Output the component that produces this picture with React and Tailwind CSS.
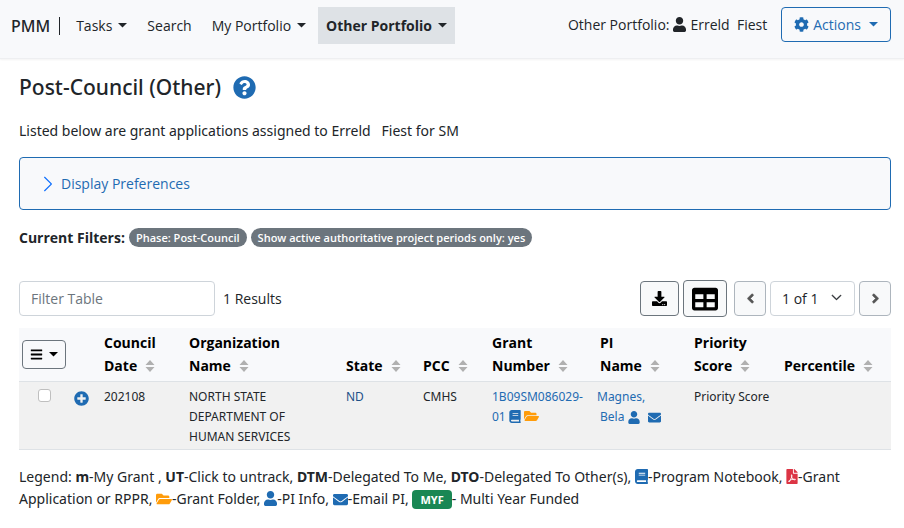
import React from 'react';
import {
  FaUser,
  FaCog,
  FaQuestionCircle,
  FaDownload,
  FaTable,
  FaAngleLeft,
  FaAngleRight,
  FaBars,
  FaPlusCircle,
  FaBook,
  FaFolderOpen,
  FaEnvelope,
  FaFilePdf,
} from 'react-icons/fa';
import { BsChevronRight, BsChevronDown } from 'react-icons/bs';

const Caret = () => (
  <svg width="9" height="5" viewBox="0 0 9 5" fill="currentColor" aria-hidden="true">
    <path d="M0 0h9L4.5 4.5z" />
  </svg>
);

const SortIcon = () => (
  <svg
    className="ml-2 inline-block align-[-1px]"
    width="10"
    height="12"
    viewBox="0 0 10 12"
    fill="#b0b0b0"
    aria-hidden="true"
  >
    <path d="M5 0l4.5 5h-9z M5 12l4.5-5h-9z" />
  </svg>
);

const NavItem = ({ label, dropdown, active }) => (
  <a
    href="#"
    className={
      active
        ? 'flex h-[37px] items-center gap-1.5 bg-[#dee2e6] px-2 font-bold'
        : 'flex h-[37px] items-center gap-1.5 px-2'
    }
  >
    {label}
    {dropdown && <Caret />}
  </a>
);

const Header = () => (
  <header className="flex h-[59px] items-start justify-between border-b border-[#eeeff1] bg-[#f8f9fb] pt-[7px] pr-[13px] pl-[11px] shadow-[0_1px_2px_rgba(0,0,0,0.05)]">
    <div className="flex items-center">
      <a
        href="#"
        className="mr-2 border-r border-[#212529] pr-[9px] font-['Noto_Sans',sans-serif] text-base leading-[18px] font-medium"
      >
        PMM
      </a>
      <nav className="flex items-center gap-1">
        <NavItem label="Tasks" dropdown />
        <NavItem label="Search" />
        <NavItem label="My Portfolio" dropdown />
        <NavItem label="Other Portfolio" dropdown active />
      </nav>
    </div>
    <div className="flex items-center">
      <span className="mr-[14px] flex items-center gap-1">
        Other Portfolio: <FaUser className="h-[15px] w-[13px]" /> Erreld&nbsp; Fiest
      </span>
      <button
        type="button"
        className="flex h-[35px] items-center gap-1 rounded border border-[#1f6bb2] px-3 text-[#1f6bb2]"
      >
        <FaCog size={15} />
        Actions
        <span className="ml-1">
          <Caret />
        </span>
      </button>
    </div>
  </header>
);

const Badge = ({ children }) => (
  <span className="rounded-full bg-[#6c757d] px-[7px] py-px text-[11px] leading-[17px] font-semibold text-white">
    {children}
  </span>
);

const Toolbar = () => (
  <div className="flex items-center justify-between">
    <div className="flex items-center gap-2">
      <input
        type="text"
        aria-label="Filter Table"
        placeholder="Filter Table"
        className="h-[35px] w-[196px] rounded border border-[#ced4da] bg-white px-[11px] placeholder:text-[#6c757d]"
      />
      <span>1 Results</span>
    </div>
    <div className="flex items-center">
      <button
        type="button"
        aria-label="Download"
        className="mr-1 flex h-[35px] w-[39px] items-center justify-center rounded border border-[#6c757d] bg-[#f8f9fa] text-black"
      >
        <FaDownload size={15} />
      </button>
      <button
        type="button"
        aria-label="Table view"
        className="mr-[7px] flex h-[37px] w-11 items-center justify-center rounded border border-[#6c757d] bg-[#f8f9fa] text-black"
      >
        <FaTable size={26} />
      </button>
      <button
        type="button"
        aria-label="Previous page"
        className="mr-1 flex h-[35px] w-8 items-center justify-center rounded border border-[#adb5bd] bg-[#f8f9fa] text-[#555]"
      >
        <FaAngleLeft size={15} stroke="currentColor" strokeWidth={16} />
      </button>
      <div className="relative mr-1">
        <select
          aria-label="Page"
          className="h-[35px] w-[85px] appearance-none rounded border border-[#ced4da] bg-white pl-[11px]"
        >
          <option>1 of 1</option>
        </select>
        <BsChevronDown
          size={11}
          stroke="currentColor"
          strokeWidth={1}
          className="pointer-events-none absolute top-[11px] right-[13px]"
        />
      </div>
      <button
        type="button"
        aria-label="Next page"
        className="flex h-[35px] w-8 items-center justify-center rounded border border-[#adb5bd] bg-[#f8f9fa] text-[#555]"
      >
        <FaAngleRight size={15} stroke="currentColor" strokeWidth={16} />
      </button>
    </div>
  </div>
);

const columns = [
  { name: 'Council Date', width: 'w-[85px]' },
  { name: 'Organization Name', width: '' },
  { name: 'State', width: 'w-[77px]' },
  { name: 'PCC', width: 'w-[69px]' },
  { name: 'Grant Number', width: 'w-[108px]' },
  { name: 'PI Name', width: 'w-[94px]' },
  { name: 'Priority Score', width: 'w-[90px]' },
  { name: 'Percentile', width: 'w-[115px]' },
];

const HeadLabel = ({ name }) => {
  const words = name.split(' ');
  const last = words.pop();
  return (
    <>
      {words.length > 0 && (
        <>
          {words.join(' ')}
          <br />
        </>
      )}
      <span className="whitespace-nowrap">
        {last}
        <SortIcon />
      </span>
    </>
  );
};

const GrantTable = () => (
  <table className="mt-[11px] w-full table-fixed border-collapse text-left">
    <colgroup>
      <col className="w-[51px]" />
      <col className="w-[26px]" />
      {columns.map((c) => (
        <col key={c.name} className={c.width} />
      ))}
    </colgroup>
    <thead className="bg-[#f8f9fb] text-black">
      <tr className="border-b border-[#dee2e6]">
        <th className="pl-[3px]">
          <button
            type="button"
            aria-label="Row actions"
            className="flex h-[29px] w-11 items-center justify-center gap-1.5 rounded border border-[#6c757d]"
          >
            <FaBars size={13} />
            <Caret />
          </button>
        </th>
        <th />
        {columns.map((c) => (
          <th key={c.name} className="px-2 pt-[3px] pb-1 align-bottom leading-[23px] font-bold">
            <HeadLabel name={c.name} />
          </th>
        ))}
      </tr>
    </thead>
    <tbody className="font-['Noto_Sans',sans-serif] text-[12px] leading-5">
      <tr className="border-b border-[#dee2e6] bg-[#f1f1f1] align-top">
        <td className="pt-[7px] pl-[19px]">
          <input
            type="checkbox"
            aria-label="Select grant"
            className="block size-[13px] appearance-none rounded-[3px] border border-[#bfbfbf] bg-white"
          />
        </td>
        <td className="pt-[9px] pl-1">
          <button type="button" aria-label="Expand row" className="block text-[#1f6bb2]">
            <FaPlusCircle size={15} />
          </button>
        </td>
        <td className="px-2 pt-[5px] pb-0.5">202108</td>
        <td className="px-2 pt-[5px] pb-0.5">
          NORTH STATE
          <br />
          DEPARTMENT OF
          <br />
          HUMAN SERVICES
        </td>
        <td className="px-2 pt-[5px] pb-0.5 text-[#1d5088]">ND</td>
        <td className="px-2 pt-[5px] pb-0.5">CMHS</td>
        <td className="pt-[5px] pb-0.5 pl-2 whitespace-nowrap text-[#1f6bb2]">
          <a href="#">
            1B09SM086029-
            <br />
            01
          </a>{' '}
          <FaBook className="inline h-[13px] w-3 align-[-2px]" />{' '}
          <FaFolderOpen className="inline h-[14px] w-[15px] align-[-2px] text-[#ff9c0a]" />
        </td>
        <td className="pt-[5px] pb-0.5 pl-[5px] text-[#1f6bb2]">
          <a href="#">Magnes,</a>
          <div className="flex items-center pl-[3px]">
            <a href="#">Bela</a>
            <FaUser className="ml-1 h-[13px] w-3" />
            <FaEnvelope size={13} className="ml-2" />
          </div>
        </td>
        <td className="px-2 pt-[5px] pb-0.5 whitespace-nowrap">Priority Score</td>
        <td />
      </tr>
    </tbody>
  </table>
);

const Legend = () => (
  <p className="mt-4 font-['Noto_Sans',sans-serif] leading-[22px]">
    Legend: <b>m</b>-My Grant , <b>UT</b>-Click to untrack, <b>DTM</b>-Delegated To Me, <b>DTO</b>-Delegated To
    Other(s), <FaBook className="inline h-[15px] w-[13px] align-[-2px] text-[#1f6bb2]" />
    -Program Notebook, <FaFilePdf className="inline h-[15px] w-3 align-[-2px] text-[#dc3545]" />
    -Grant Application or RPPR, <FaFolderOpen size={16} className="inline align-[-3px] text-[#ff9c0a]" />
    -Grant Folder, <FaUser className="inline h-[15px] w-[13px] align-[-2px] text-[#1f6bb2]" />
    -PI Info, <FaEnvelope size={15} className="inline align-[-3px] text-[#1f6bb2]" />
    -Email PI,{' '}
    <span className="inline-block rounded bg-[#198754] px-2 text-[11px] leading-[19px] font-bold text-white">MYF</span>-
    Multi Year Funded
  </p>
);

const App = () => {
  return (
    <div className="min-h-screen bg-white font-['Open_Sans',sans-serif] text-[14px] text-[#212529]">
      <Header />
      <main className="pt-3 pr-[13px] pl-[19px]">
        <h1 className="flex items-center gap-3 font-['Noto_Sans',sans-serif] text-[21px] leading-8 font-medium">
          Post-Council (Other)
          <FaQuestionCircle size={23} className="text-[#1f6bb2]" />
        </h1>
        <p className="mt-4 font-['Noto_Sans',sans-serif] leading-[23px]">
          Listed below are grant applications assigned to Erreld&nbsp;&nbsp; Fiest for SM
        </p>

        <button
          type="button"
          className="mt-[15px] flex h-[53px] w-full items-center gap-1 rounded border border-[#1f6bb2] bg-[#f8f9fb] px-[19px] text-[#1f6bb2]"
        >
          <BsChevronRight size={18} className="text-[#0d6efd]" />
          Display Preferences
        </button>

        <div className="mt-4 mb-[31px] flex items-center gap-1 leading-[23px]">
          <span className="font-bold">Current Filters:</span>
          <Badge>Phase: Post-Council</Badge>
          <Badge>Show active authoritative project periods only: yes</Badge>
        </div>

        <Toolbar />
        <GrantTable />
        <Legend />
      </main>
    </div>
  );
};

export default App;
